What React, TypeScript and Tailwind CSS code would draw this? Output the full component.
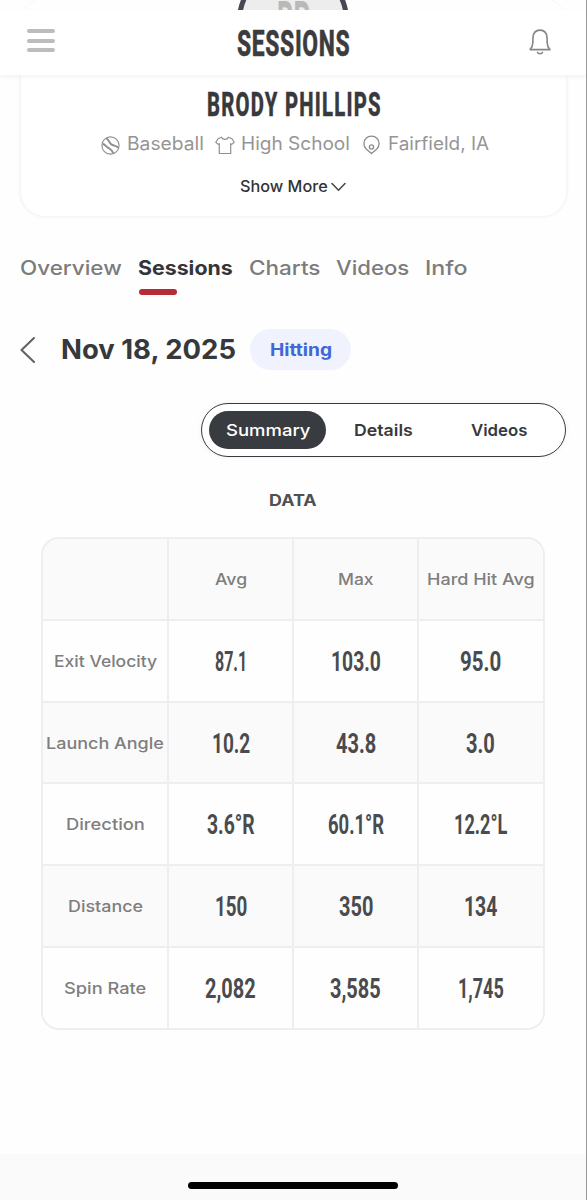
import { useLayoutEffect, useRef, useState } from "react";

// Draws a single line of text condensed or widened to fill its box.
function FitText({ text, className }: { text: string; className: string }) {
  const outer = useRef<HTMLSpanElement>(null);
  const inner = useRef<HTMLSpanElement>(null);
  const [scale, setScale] = useState(1);
  useLayoutEffect(() => {
    const fit = () => {
      if (outer.current && inner.current && inner.current.offsetWidth > 0) {
        setScale(outer.current.offsetWidth / inner.current.offsetWidth);
      }
    };
    fit();
    document.fonts?.ready.then(fit);
  }, [text]);
  return (
    <span ref={outer} className={`block shrink-0 whitespace-nowrap ${className}`}>
      <span ref={inner} className="inline-block origin-left" style={{ transform: `scaleX(${scale})` }}>
        {text}
      </span>
    </span>
  );
}

const condensed = "font-['Roboto',sans-serif] font-bold";
const heading = "font-['Roboto',sans-serif] font-extrabold";

function BellIcon() {
  return (
    <svg className="h-[26px] w-[22px]" viewBox="0 0 22 26" fill="none" stroke="#858585" strokeWidth="1.6" strokeLinecap="round" strokeLinejoin="round">
      <path d="M1.1 20.6 C2.8 18.8 3.7 16.8 3.8 14 L4 8.5 C4.3 4 7 1.1 11 1.1 S17.7 4 18 8.5 L18.2 14 C18.3 16.8 19.2 18.8 20.9 20.6 Z" />
      <path d="M8.5 23.4 C9.3 25.2 12.7 25.2 13.5 23.4" />
    </svg>
  );
}

function BaseballIcon() {
  return (
    <svg className="h-[19px] w-[19px]" viewBox="0 0 19 19" fill="none" stroke="#8e8e8e" strokeWidth="1.1">
      <circle cx="9.5" cy="9.5" r="8.6" />
      <path d="M5.2 2.4 C7.8 3 7.6 6.4 10.4 8.4 C12.8 10 15.4 9.4 17.2 11.8" strokeWidth="2" />
      <path d="M1.6 8 C4.2 8.2 4.8 10.6 7.6 12 C10 13.4 11.4 14.6 12.2 17.2" strokeWidth="2" />
    </svg>
  );
}

function ShirtIcon() {
  return (
    <svg className="h-[19px] w-[20px]" viewBox="0 0 20 19" fill="none" stroke="#909090" strokeWidth="1.2" strokeLinejoin="round">
      <path d="M6.5 1.2 L3 2.8 L.8 6.3 L3.3 8.4 L4.3 7.6 V17.5 H15.7 V7.6 L16.7 8.4 L19.2 6.3 L17 2.8 L13.5 1.2 C12.5 4 7.5 4 6.5 1.2 Z" />
    </svg>
  );
}

function PinIcon() {
  return (
    <svg className="h-[20px] w-[17px]" viewBox="0 0 17 20" fill="none" stroke="#8c8c8c" strokeWidth="1.3" strokeLinejoin="round">
      <path d="M8.5 18.6 L3.2 14 C1.7 12.6 .9 10.8 .9 8.6 C.9 4.2 4.1 1.1 8.5 1.1 S16.1 4.2 16.1 8.6 C16.1 10.8 15.3 12.6 13.8 14 Z" />
      <circle cx="8.5" cy="12" r="2.1" />
    </svg>
  );
}

const rows = [
  { label: "Exit Velocity", lw: "w-[103px]", values: [["87.1", "w-[32px]"], ["103.0", "w-[50px]"], ["95.0", "w-[41px]"]] },
  { label: "Launch Angle", lw: "w-[118px]", values: [["10.2", "w-[38px]"], ["43.8", "w-[40px]"], ["3.0", "w-[29px]"]] },
  { label: "Direction", lw: "w-[79px]", values: [["3.6°R", "w-[48px]"], ["60.1°R", "w-[56px]"], ["12.2°L", "w-[53px]"]] },
  { label: "Distance", lw: "w-[75px]", values: [["150", "w-[32px]"], ["350", "w-[34px]"], ["134", "w-[33px]"]] },
  { label: "Spin Rate", lw: "w-[82px]", values: [["2,082", "w-[51px]"], ["3,585", "w-[51px]"], ["1,745", "w-[46px]"]] },
];

const columns = "grid flex-1 grid-cols-[126px_125px_125px_124px]";
const cell = "flex items-center justify-center border-[#eeeeee]";

export default function App() {
  return (
    <div className="relative flex h-[1200px] w-[587px] flex-col overflow-hidden border-r border-[#999999] bg-[#fefefe] font-['Inter',sans-serif]">
      <header className="relative z-10 h-[75px] shrink-0 pt-[10px]">
        <div className="absolute inset-x-0 top-0 h-[10px] overflow-hidden">
          <div className="absolute -top-[2px] left-[20px] h-[60px] w-[547px] rounded-[24px] border border-[#f8f8f8]" />
          <div className="absolute -top-[35px] left-[237px] flex h-[112px] w-[112px] items-center justify-center rounded-full border-[5px] border-[#454850] bg-[#ededed]">
            <FitText text="BP" className={`${condensed} w-[33px] text-[54px] leading-[60px] text-[#b9b9b9]`} />
          </div>
        </div>
        <div className="flex h-[65px] items-center bg-white pl-[27px] shadow-[0_2px_4px_rgba(0,0,0,0.05)]">
          <div className="flex w-[28px] flex-col gap-[5.5px] pb-[4px]">
            <span className="h-1 rounded-full bg-[#bcbcbc]" />
            <span className="h-1 rounded-full bg-[#bcbcbc]" />
            <span className="h-1 rounded-full bg-[#bcbcbc]" />
          </div>
          <FitText text="SESSIONS" className={`${heading} ml-[182px] w-[113px] pt-[2px] text-[36px] leading-[40px] tracking-[1px] text-[#3c3c3e] [-webkit-text-stroke:0.4px_#3c3c3e]`} />
          <div className="ml-[179px] pb-[2px]">
            <BellIcon />
          </div>
        </div>
      </header>

      <section className="ml-[21px] flex h-[141px] w-[545px] shrink-0 flex-col rounded-b-[24px] bg-white pt-[11px] shadow-[0_0_4px_rgba(0,0,0,0.09)]">
        <FitText text="BRODY PHILLIPS" className={`${heading} ml-[186px] w-[175px] text-[32.5px] leading-[38px] tracking-[2px] text-[#38393d] [-webkit-text-stroke:0.4px_#38393d]`} />
        <div className="mt-[10px] flex h-[20px] items-center text-[18px] leading-[20px] text-[#959595]">
          <div className="ml-[80px] pt-[2px]"><BaseballIcon /></div>
          <FitText text="Baseball" className="ml-[7px] w-[77px]" />
          <div className="ml-[11px] pt-[2px]"><ShirtIcon /></div>
          <FitText text="High School" className="ml-[6px] w-[109px]" />
          <div className="ml-[13px] pt-[2px]"><PinIcon /></div>
          <FitText text="Fairfield, IA" className="ml-[8px] w-[101px]" />
        </div>
        <div className="mt-[23px] flex h-[20px] items-center pl-[219px] text-[15.5px] leading-[20px] font-medium text-[#333333]">
          <FitText text="Show More" className="w-[88px]" />
          <svg className="ml-[2px] h-[10px] w-[17px]" viewBox="0 0 17 10" fill="none" stroke="#444444" strokeWidth="1.5" strokeLinecap="round" strokeLinejoin="round">
            <path d="M2 1.5 L8.5 8.2 L15 1.5" />
          </svg>
        </div>
      </section>

      <nav className="mt-[40px] flex h-[40px] shrink-0 pl-[20px] text-[20px] leading-[24px] font-medium text-[#7c7c7c]">
        <FitText text="Overview" className="w-[102px]" />
        <div className="ml-[16px] w-[95px]">
          <FitText text="Sessions" className="w-[95px] font-bold text-[#333539]" />
          <div className="mt-[9px] ml-px h-[6px] w-[38px] rounded-full bg-[#b72b37]" />
        </div>
        <FitText text="Charts" className="ml-[16px] w-[72px]" />
        <FitText text="Videos" className="ml-[15px] w-[73px]" />
        <FitText text="Info" className="ml-[16px] w-[43px]" />
      </nav>

      <div className="mt-[33px] flex h-[41px] shrink-0 items-center pl-[20px]">
        <svg className="h-[27px] w-[16px]" viewBox="0 0 16 27" fill="none" stroke="#616161" strokeWidth="2" strokeLinecap="round" strokeLinejoin="round">
          <path d="M14 2 L1.5 14 L14 26" />
        </svg>
        <FitText text="Nov 18, 2025" className="ml-[25px] w-[175px] text-[27px] leading-[32px] font-bold text-[#36383c]" />
        <div className="ml-[14px] flex h-[41px] w-[101px] items-center justify-center rounded-full bg-[#f0f2fd]">
          <FitText text="Hitting" className="w-[62px] text-[17px] leading-[20px] font-bold text-[#3e68d8]" />
        </div>
      </div>

      <div className="mt-[33px] ml-[201px] flex h-[54px] w-[365px] shrink-0 items-center rounded-full border-[1.5px] border-[#39393b] bg-white pl-[7px] text-[16.5px] leading-[20px] font-semibold text-[#38393b] shadow-[0_0_6px_rgba(0,0,0,0.05)]">
        <div className="flex h-[38px] w-[117px] items-center justify-center rounded-full bg-[#383b40] font-medium text-white">
          <FitText text="Summary" className="w-[84px]" />
        </div>
        <FitText text="Details" className="ml-[28px] w-[59px]" />
        <FitText text="Videos" className="ml-[58px] w-[57px]" />
      </div>

      <div className="mt-[33px] flex h-[20px] shrink-0 justify-center">
        <FitText text="DATA" className="w-[48px] text-[16px] leading-[20px] font-bold text-[#505050]" />
      </div>

      <div className="mt-[27px] ml-[41px] flex h-[493px] w-[504px] shrink-0 flex-col overflow-hidden rounded-[18px] border-2 border-[#eeeeee] text-[16px] leading-[20px] font-medium text-[#7e7e7e]">
        <div className={`${columns} bg-[#fafafa]`}>
          <div className={`${cell} border-r-2`} />
          <div className={`${cell} border-r-2`}><FitText text="Avg" className="w-[32px]" /></div>
          <div className={`${cell} border-r-2`}><FitText text="Max" className="w-[36px]" /></div>
          <div className={cell}><FitText text="Hard Hit Avg" className="w-[108px]" /></div>
        </div>
        {rows.map((row, i) => (
          <div key={row.label} className={`${columns} border-t-2 border-[#eeeeee] ${i % 2 ? "bg-[#fafafa]" : "bg-[#fefefe]"}`}>
            <div className={`${cell} border-r-2`}><FitText text={row.label} className={row.lw} /></div>
            {row.values.map(([value, width], j) => (
              <div key={value} className={`${cell} pt-[2px] ${j < 2 ? "border-r-2" : "pr-px"}`}>
                <FitText text={value} className={`${condensed} ${width} text-[27px] leading-[32px] text-[#4a4b4e]`} />
              </div>
            ))}
          </div>
        ))}
      </div>

      <footer className="mt-auto flex h-[46px] shrink-0 justify-center bg-[#fafafa] pt-[28px]">
        <div className="h-[7px] w-[210px] rounded-full bg-black" />
      </footer>
    </div>
  );
}
